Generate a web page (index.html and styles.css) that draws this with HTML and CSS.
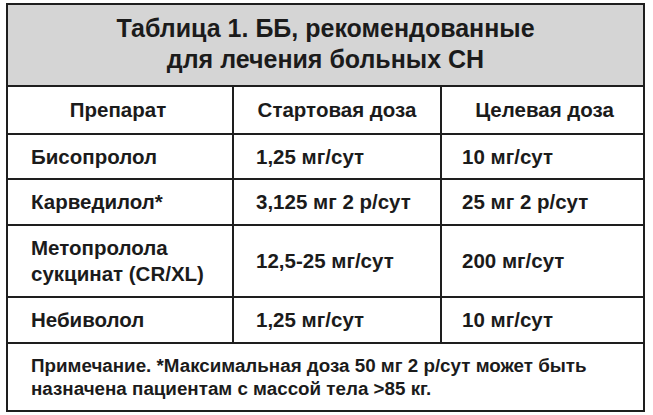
FILE: index.html
```html
<!DOCTYPE html>
<html lang="ru">
<head>
<meta charset="utf-8">
<link rel="stylesheet" href="styles.css">
</head>
<body>
<table class="dose-table">
  <colgroup>
    <col class="col-drug">
    <col class="col-start">
    <col class="col-target">
  </colgroup>
  <thead>
    <tr class="title-row">
      <th colspan="3" class="title">Таблица 1. ББ, рекомендованные<br>для лечения больных СН</th>
    </tr>
    <tr class="head-row">
      <th class="c1">Препарат</th>
      <th class="c2">Стартовая доза</th>
      <th class="c3">Целевая доза</th>
    </tr>
  </thead>
  <tbody>
    <tr class="r1">
      <td class="drug">Бисопролол</td>
      <td class="dose">1,25 мг/сут</td>
      <td class="target">10 мг/сут</td>
    </tr>
    <tr class="r2">
      <td class="drug">Карведилол*</td>
      <td class="dose">3,125 мг 2 р/сут</td>
      <td class="target">25 мг 2 р/сут</td>
    </tr>
    <tr class="r3">
      <td class="drug two-line">Метопролола<br>сукцинат (CR/XL)</td>
      <td class="dose">12,5-25 мг/сут</td>
      <td class="target">200 мг/сут</td>
    </tr>
    <tr class="r4">
      <td class="drug">Небиволол</td>
      <td class="dose">1,25 мг/сут</td>
      <td class="target">10 мг/сут</td>
    </tr>
  </tbody>
  <tfoot>
    <tr class="note-row">
      <td colspan="3" class="note">Примечание. *Максимальная доза 50 мг 2 р/сут может быть<br>назначена пациентам с массой тела &gt;85 кг.</td>
    </tr>
  </tfoot>
</table>
</body>
</html>
```

FILE: styles.css
```css
html, body {
  margin: 0;
  padding: 0;
  background: #ffffff;
}

body {
  padding: 3px 0 0 6px;
  font-family: "Liberation Sans", Arial, sans-serif;
  font-weight: bold;
  color: #1b1b1b;
}

.dose-table {
  border-collapse: collapse;
  width: 637px;
  table-layout: fixed;
}

.col-drug { width: 226px; }
.col-start { width: 208px; }
.col-target { width: 203px; }

.dose-table th,
.dose-table td {
  border: 2px solid #1e1e1e;
  padding: 0;
  vertical-align: middle;
}

.dose-table .title {
  background: #d5d5d5;
  height: 78px;
  font-size: 25px;
  line-height: 31px;
  text-align: center;
  font-weight: bold;
  padding-bottom: 2px;
}

.dose-table .head-row th {
  height: 46px;
  font-size: 20.5px;
  text-align: center;
  font-weight: bold;
}

.dose-table .head-row .c1 { padding-right: 4px; }
.dose-table .head-row .c3 { padding-left: 4px; }

.dose-table .drug,
.dose-table .dose,
.dose-table .target {
  font-size: 20.5px;
  white-space: nowrap;
}

.dose-table .drug { padding-left: 23px; }
.dose-table .dose { padding-left: 22px; }
.dose-table .target { padding-left: 20px; }

.dose-table .r1 td { height: 43px; }
.dose-table .r2 td { height: 44px; }
.dose-table .r3 td { height: 70px; }
.dose-table .r4 td { height: 44px; }

.dose-table .two-line { line-height: 26px; }

.dose-table .note {
  height: 66px;
  font-size: 18.8px;
  line-height: 23px;
  padding-left: 23px;
}
```
